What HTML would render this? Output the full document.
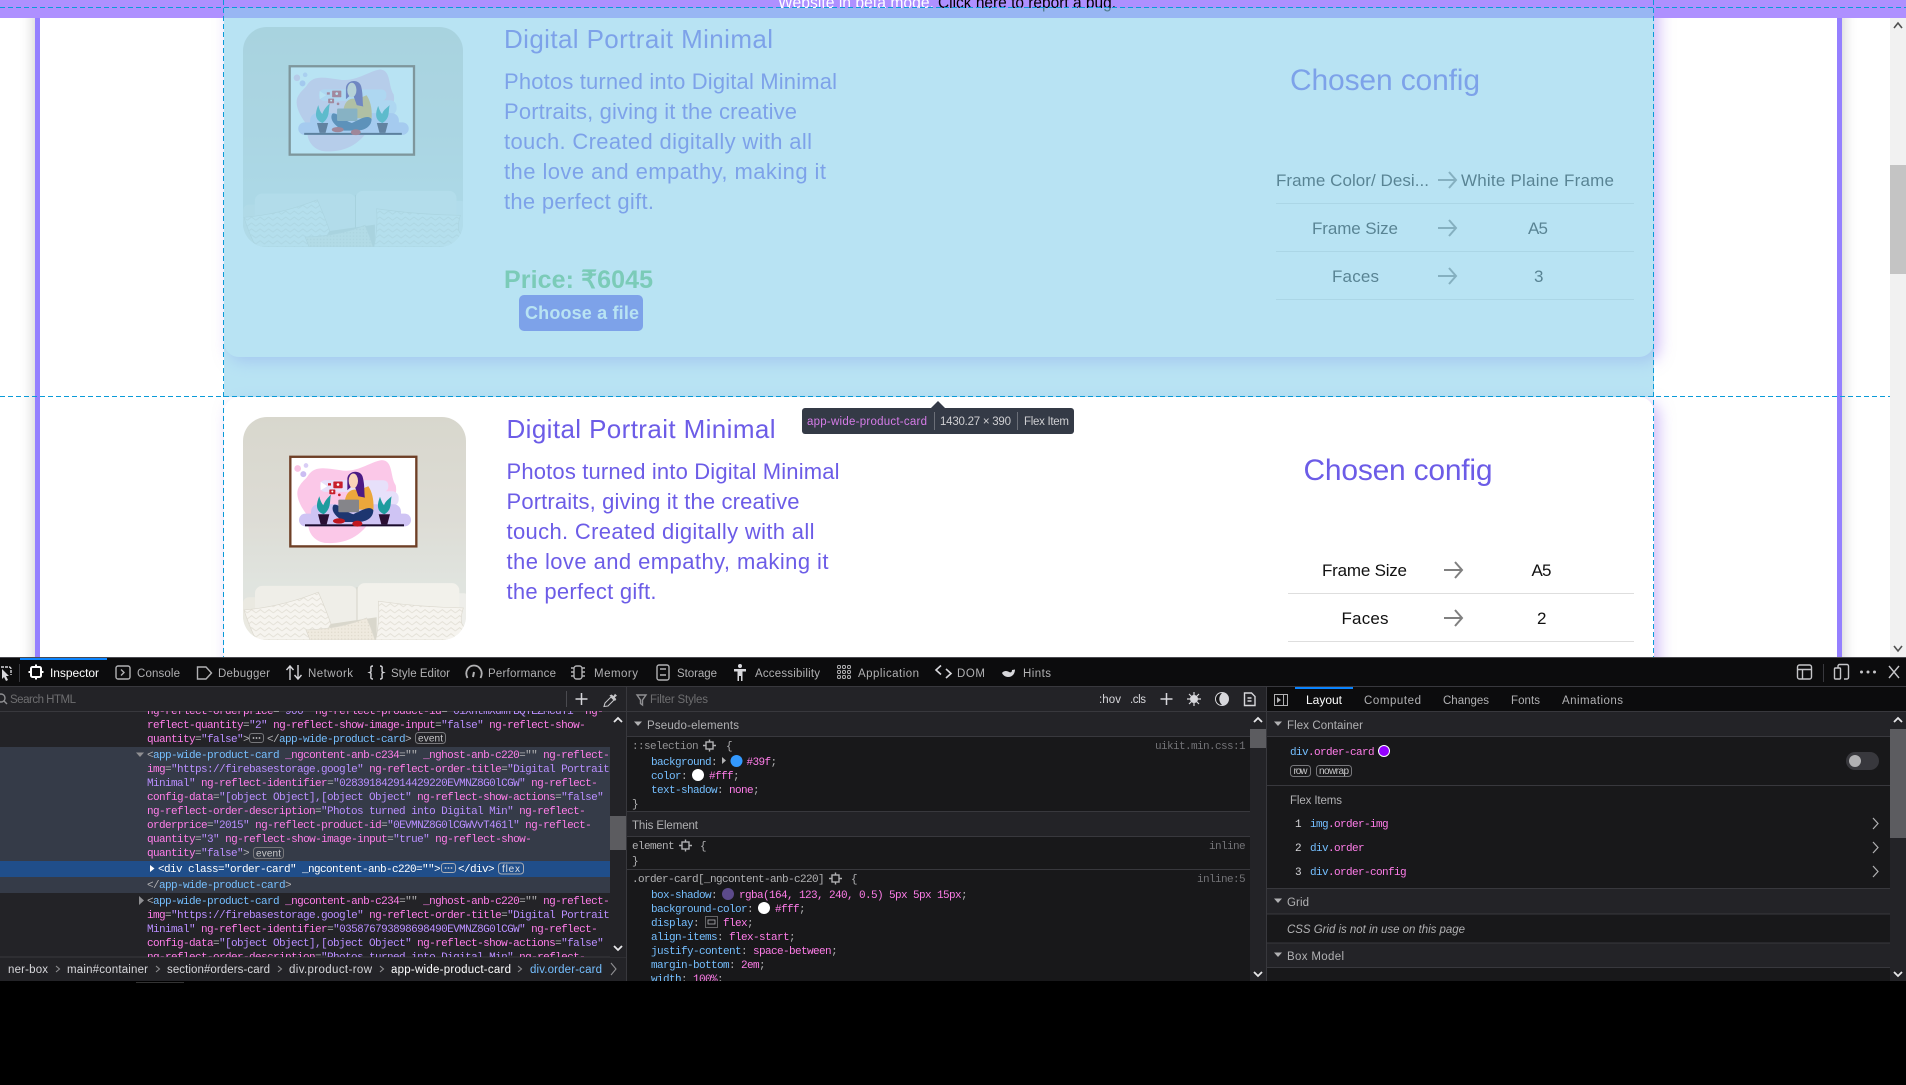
<!DOCTYPE html>
<html lang="en">
<head>
<meta charset="utf-8">
<title>Orders</title>
<style>
html,body{margin:0;padding:0;width:1906px;height:1085px;overflow:hidden;background:#000}
.abs{position:absolute}
#page{position:absolute;left:0;top:0;width:1906px;height:657px;background:#fff;overflow:hidden}
#box{position:absolute;left:35px;top:0;width:1797px;height:800px;border-left:5px solid #9580ff;border-right:5px solid #9580ff;background:#fff;box-shadow:0 0 14px rgba(0,0,0,.22)}
.card{position:absolute;left:224px;width:1430px;background:#fff;border-radius:15px;box-shadow:5px 5px 15px rgba(164,123,240,.5)}
#bar{position:absolute;left:0;top:0;width:1906px;height:18px;background:#ae90ff}
#sb{position:absolute;left:1890px;top:18px;width:16px;height:639px;background:#f1f1f1}
#th{position:absolute;left:0;top:147px;width:16px;height:109px;background:#c4c4c4}
#hl{position:absolute;left:224px;top:7.5px;width:1430px;height:389px;background:rgba(137,208,235,.6)}
svg{position:absolute;left:0;top:0;display:block}
text{font-family:"Liberation Sans",sans-serif;white-space:pre}
.m{font-family:"Liberation Mono","DejaVu Sans Mono",monospace;font-size:11px;letter-spacing:-.6px;fill:#b1b1b3}
.a{fill:#ff7de9}.b{fill:#75bfff}.v{fill:#b98eff}.p{fill:#b1b1b3}.w{fill:#fff}.g{fill:#8a8a8e}
.u{font-size:11.5px;fill:#b1b1b3}
.pt{fill:#6c5ce7}
.rw{font-size:17px;fill:#111}
.ic{fill:none;stroke:#b1b1b3;stroke-width:1.4}
.hd{font-size:11.5px;fill:#b1b1b3}
.ln{fill:#38383d}
.bd{fill:none;stroke:#77777b;stroke-width:1}
.bt{font-size:10px;fill:#c8c8ca}
</style>
</head>
<body>
<div id="page">
  <div id="box"></div>
  <div class="card" style="top:-33px;height:390px"></div>
  <div class="card" style="top:397px;height:390px"></div>
  <div id="bar"></div>
  <div id="sb"><div id="th"></div></div>
  <svg width="1906" height="657" viewBox="0 0 1906 657">
    <defs>
      <linearGradient id="wall" x1="0" y1="0" x2="0" y2="1">
        <stop offset="0" stop-color="#d8d7cd"/><stop offset=".45" stop-color="#dddcd5"/><stop offset=".75" stop-color="#e0e4df"/><stop offset="1" stop-color="#e4e6e0"/>
      </linearGradient>
      <pattern id="kn" width="26" height="18" patternUnits="userSpaceOnUse">
        <rect width="26" height="18" fill="#f6f4ef"/>
        <path d="M0 13L13 3L26 13" fill="none" stroke="#e2dfd5" stroke-width="2.500"/>
      </pattern>
      <pattern id="kd" width="10" height="10" patternUnits="userSpaceOnUse">
        <rect width="10" height="10" fill="#efeadf"/>
        <circle cx="5" cy="5" r="2" fill="#dfd9cb"/>
      </pattern>
      <clipPath id="rc"><rect x="39" y="21" width="669" height="667" rx="72"/></clipPath>
      <symbol id="art" viewBox="39 21 669 667" preserveAspectRatio="none">
        <g clip-path="url(#rc)">
          <rect x="39" y="21" width="669" height="667" fill="url(#wall)"/>
          <rect x="181" y="140" width="378" height="268" fill="#fff" stroke="#6e3f26" stroke-width="7"/>
          <path d="M235 195C255 165 290 175 330 180C380 190 420 155 455 150C490 150 480 200 497 225C505 260 480 290 440 300C400 380 350 400 290 398C245 395 225 350 240 325C210 290 190 250 210 225C220 210 230 205 235 195Z" fill="#fbc8e8"/>
          <rect x="270" y="210" width="205" height="35" rx="15" fill="#e7e0fa"/>
          <rect x="400" y="243" width="106" height="45" rx="20" fill="#e7e0fa"/>
          <rect x="243" y="282" width="270" height="50" rx="22" fill="#cfc4f4"/>
          <rect x="207" y="310" width="336" height="38" rx="19" fill="#cfc4f4"/>
          <circle cx="203" cy="175" r="10" fill="#f9c3e4"/><circle cx="228" cy="166" r="7" fill="#d9cdf5"/><circle cx="220" cy="192" r="9" fill="#cbbdf2"/>
          <path d="M272 215L292 228L272 240Z" fill="#fff"/>
          <path d="M281 312C262 305 254 290 268 258C272 275 276 280 280 285C285 270 295 260 303 253C298 272 305 295 281 312Z" fill="#1e9c9e"/>
          <path d="M264 312H298L290 342H272Z" fill="#2a0f33"/>
          <path d="M463 312C444 305 438 290 450 260C455 275 458 280 462 285C466 272 478 265 485 258C480 275 488 298 463 312Z" fill="#1e9c9e"/>
          <path d="M446 312H480L472 342H454Z" fill="#2a0f33"/>
          <rect x="225" y="342" width="297" height="6" fill="#1a0c2c"/>
          <path d="M345 270C350 240 370 235 385 240L415 228C430 250 432 280 430 300L345 295Z" fill="#eba73b"/>
          <path d="M352 205C355 180 392 178 398 200C405 225 402 255 405 262L385 258L372 222L352 240Z" fill="#4b1a85"/>
          <ellipse cx="370" cy="212" rx="14" ry="22" fill="#f9d3b8"/>
          <path d="M310 285C320 275 345 305 370 312C395 300 420 285 430 300C430 325 405 335 385 335L345 335C325 325 300 305 310 285Z" fill="#1d3670"/>
          <rect x="325" y="268" width="62" height="38" rx="3" fill="#85858a"/>
          <ellipse cx="327" cy="332" rx="18" ry="8" fill="#c0181f"/><ellipse cx="382" cy="340" rx="15" ry="9" fill="#c0181f"/>
          <rect x="310" y="214" width="28" height="20" rx="2" fill="#c8202c"/><rect x="298" y="238" width="18" height="14" rx="2" fill="#c8202c"/><rect x="294" y="219" width="9" height="7" fill="#c8202c"/><circle cx="328" cy="254" r="4" fill="#c8202c"/>
          <circle cx="324" cy="223" r="4" fill="#fff"/><circle cx="307" cy="244" r="3" fill="#fff"/>
          <rect x="39" y="560" width="55" height="135" rx="18" fill="#eae9e1"/><rect x="665" y="548" width="50" height="145" rx="14" fill="#eeeeea"/>
          <rect x="75" y="526" width="307" height="170" rx="22" fill="#efeee8"/>
          <rect x="382" y="518" width="306" height="176" rx="22" fill="#f2f1eb"/>
          <path d="M381 530V690" stroke="#cfcec4" stroke-width="2.500"/>
          <path d="M300 640L440 620L440 690H290Z" fill="#d9d7cc"/>
          <path d="M42 598Q150 590 265 545Q285 590 303 640Q285 660 300 688L78 688Q55 640 42 598Z" fill="url(#kn)" stroke="#dcd9cf" stroke-width="2"/>
          <path d="M228 658Q330 655 410 622Q425 655 435 688L240 688Q235 675 228 658Z" fill="url(#kd)" stroke="#dcd9cf" stroke-width="2"/>
          <path d="M445 572Q570 590 700 592Q685 640 705 650Q695 670 680 688L437 688Q450 630 445 572Z" fill="url(#kn)" stroke="#dcd9cf" stroke-width="2"/>
        </g>
      </symbol>
    </defs>

    <text x="778" y="8" font-size="17" fill="#fff" textLength="156" lengthAdjust="spacingAndGlyphs">Website in beta mode.</text>
    <text x="938" y="8" font-size="17" fill="#000" textLength="178" lengthAdjust="spacingAndGlyphs">Click here to report a bug.</text>

    <!-- Card 1 -->
    <use href="#art" x="243" y="27" width="220" height="220"/>
    <text class="pt" x="504" y="48" font-size="26" textLength="269">Digital Portrait Minimal</text>
    <text class="pt" x="504" y="89" font-size="22" textLength="333">Photos turned into Digital Minimal</text>
    <text class="pt" x="504" y="119" font-size="22" textLength="293">Portraits, giving it the creative</text>
    <text class="pt" x="504" y="149" font-size="22" textLength="308">touch. Created digitally with all</text>
    <text class="pt" x="504" y="179" font-size="22" textLength="322">the love and empathy, making it</text>
    <text class="pt" x="504" y="209" font-size="22" textLength="150">the perfect gift.</text>
    <text x="504" y="288" font-size="25" font-weight="700" fill="#66c36b" textLength="149">Price: ₹6045</text>
    <rect x="519" y="295" width="124" height="36" rx="5" fill="#6c5ce7"/>
    <text x="525" y="319" font-size="18" font-weight="700" fill="#fff" textLength="114">Choose a file</text>
    <text class="pt" x="1290" y="90" font-size="30" textLength="190">Chosen config</text>
    <text class="rw" x="1276" y="186" textLength="153">Frame Color/ Desi...</text>
    <text class="rw" x="1461" y="186" textLength="153">White Plaine Frame</text>
    <text class="rw" x="1312" y="234" textLength="86">Frame Size</text>
    <text class="rw" x="1528" y="234" textLength="20">A5</text>
    <text class="rw" x="1332" y="282" textLength="47">Faces</text>
    <text class="rw" x="1534" y="282" textLength="9">3</text>
    <g fill="none" stroke="#808080" stroke-width="2">
      <path d="M1438 180H1456M1449 172L1456 180L1449 188"/>
      <path d="M1438 228H1456M1449 220L1456 228L1449 236"/>
      <path d="M1438 276H1456M1449 268L1456 276L1449 284"/>
      <path d="M1444 570H1462M1455 562L1462 570L1455 578"/>
      <path d="M1444 618H1462M1455 610L1462 618L1455 626"/>
    </g>
    <g fill="#dedede">
      <rect x="1276" y="203" width="358" height="1"/><rect x="1276" y="251" width="358" height="1"/><rect x="1276" y="299" width="358" height="1"/>
      <rect x="1288" y="593" width="346" height="1"/><rect x="1288" y="641" width="346" height="1"/>
    </g>

    <!-- Card 2 -->
    <use href="#art" x="243" y="417" width="223" height="223"/>
    <text class="pt" x="506.5" y="438" font-size="26" textLength="269">Digital Portrait Minimal</text>
    <text class="pt" x="506.5" y="479" font-size="22" textLength="333">Photos turned into Digital Minimal</text>
    <text class="pt" x="506.5" y="509" font-size="22" textLength="293">Portraits, giving it the creative</text>
    <text class="pt" x="506.5" y="539" font-size="22" textLength="308">touch. Created digitally with all</text>
    <text class="pt" x="506.5" y="569" font-size="22" textLength="322">the love and empathy, making it</text>
    <text class="pt" x="506.5" y="599" font-size="22" textLength="150">the perfect gift.</text>
    <text class="pt" x="1303.5" y="480" font-size="30" textLength="189">Chosen config</text>
    <text class="rw" x="1322" y="576" textLength="85">Frame Size</text>
    <text class="rw" x="1531.5" y="576" textLength="20">A5</text>
    <text class="rw" x="1341.5" y="624" textLength="47">Faces</text>
    <text class="rw" x="1537" y="624" textLength="9">2</text>

    <!-- scrollbar arrows -->
    <path d="M1894 28L1898 23L1902 28" fill="none" stroke="#505050" stroke-width="1.6"/>
    <path d="M1894 646L1898 651L1902 646" fill="none" stroke="#505050" stroke-width="1.6"/>
  </svg>
  <div id="hl"></div>
  <svg width="1906" height="657" viewBox="0 0 1906 657">
    <g stroke="#0a9bd8" stroke-width="1" stroke-dasharray="5 3" fill="none">
      <path d="M0 7.5H1906"/>
      <path d="M0 396.5H1890"/>
      <path d="M223.5 0V657"/>
      <path d="M1653.5 0V657"/>
    </g>
    <path d="M938 401L931 408H945Z" fill="#343a46"/>
    <rect x="802" y="408" width="272" height="26" rx="3" fill="#343a46"/>
    <text x="807" y="425" font-size="11.5" fill="#d67ce8" textLength="120">app-wide-product-card</text>
    <rect x="934" y="412" width="1" height="18" fill="#6b6f78"/>
    <text x="940" y="425" font-size="11.5" fill="#cfcfd2" textLength="71">1430.27 × 390</text>
    <rect x="1017" y="412" width="1" height="18" fill="#6b6f78"/>
    <text x="1024" y="425" font-size="11.5" fill="#cfcfd2" textLength="45">Flex Item</text>
  </svg>
</div>

<svg width="1906" height="1085" viewBox="0 0 1906 1085" style="top:0;left:0">
  <defs>
    <clipPath id="ch"><rect x="0" y="711" width="610" height="246"/></clipPath>
    <clipPath id="cs"><rect x="627" y="711" width="623" height="270"/></clipPath>
  </defs>
  <!-- base panels -->
  <rect x="0" y="657" width="1906" height="428" fill="#000"/>
  <rect x="0" y="657" width="1906" height="1" fill="#4a4a4f"/>
  <rect x="0" y="658" width="1906" height="28" fill="#0c0c0d"/>
  <rect x="0" y="686" width="1906" height="1" fill="#38383d"/>
  <rect x="0" y="687" width="1267" height="24" fill="#232327"/>
  <rect x="1267" y="687" width="639" height="24" fill="#0c0c0d"/>
  <rect x="0" y="711" width="1906" height="1" fill="#38383d"/>
  <rect x="0" y="712" width="610" height="245" fill="#232327"/>
  <rect x="0" y="747" width="610" height="146" fill="#353b48"/>
  <rect x="0" y="861" width="610" height="16" fill="#204e8a"/>
  <rect x="0" y="957" width="627" height="24" fill="#232327"/>
  <rect x="0" y="956.5" width="627" height="1" fill="#38383d"/>
  <rect x="610" y="712" width="16" height="245" fill="#232327"/>
  <rect x="610" y="816" width="16" height="34" fill="#5c5c60"/>
  <rect x="626" y="687" width="1" height="294" fill="#38383d"/>
  <rect x="627" y="712" width="623" height="269" fill="#18181a"/>
  <rect x="1250" y="712" width="16" height="269" fill="#232327"/>
  <rect x="1250" y="729" width="16" height="19" fill="#5c5c60"/>
  <rect x="1266" y="687" width="1" height="294" fill="#38383d"/>
  <rect x="1267" y="712" width="623" height="269" fill="#18181a"/>
  <rect x="1890" y="712" width="16" height="269" fill="#232327"/>
  <rect x="1890" y="729" width="16" height="109" fill="#5c5c60"/>
  <rect x="136" y="982" width="48" height="1" fill="#333"/>

  <!-- scroll arrows -->
  <g fill="none" stroke="#e8e8ea" stroke-width="1.8">
    <path d="M614 722L618 718L622 722"/><path d="M614 946L618 950L622 946"/>
    <path d="M1254 722L1258 718L1262 722"/><path d="M1254 972L1258 976L1262 972"/>
    <path d="M1894 722L1898 718L1902 722"/><path d="M1894 972L1898 976L1902 972"/>
  </g>

  <!-- main tabs -->
  <rect x="20" y="658" width="87" height="2" fill="#0a84ff"/>
  <rect x="19" y="664" width="1" height="18" fill="#38383d"/>
  <g fill="none" stroke="#d7d7db" stroke-width="1.4">
    <path d="M1 667H9a2 2 0 0 1 2 2V675" stroke-dasharray="3 1"/>
    <path d="M2 669L9 676L6 676L8 680L6 681L4 677L2 679Z" fill="#d7d7db" stroke="none"/>
  </g>
  <g fill="none" stroke="#fff" stroke-width="2">
    <rect x="31" y="667" width="10" height="10" rx="1.5"/>
    <path d="M36 664.500V667M36 677V679.500M28.500 672H31M41 672H43.500"/>
  </g>
  <text class="w" x="50" y="677" font-size="12" textLength="49">Inspector</text>

  <g class="ic">
    <rect x="116" y="666" width="14" height="13" rx="2"/>
    <path d="M121 669.500L124 672.500L121 675.500"/>
    <path d="M197.500 667H206L211.500 673L206 679H197.500Z"/>
    <path d="M290 680V666M286.500 670L290 666L293.500 670M298 665V679M294.500 675L298 679L301.500 675" stroke="#d7d7db"/>
    <path d="M467.500 678C464 671 469 665.500 474 665.500C479 665.500 484 671 480.500 678" stroke-width="1.8"/>
    <path d="M474 672L473 677" stroke-width="2"/>
    <rect x="574" y="666" width="8" height="13" rx="2.500"/>
    <path d="M571 668H574M571 672H574M571 676H574M582 668H585M582 672H585M582 676H585"/>
    <rect x="657" y="665" width="12" height="15" rx="2"/>
    <path d="M660 669H666M660 675H666"/>
    <rect x="837.500" y="665.500" width="3" height="3" rx="1.200" stroke-width="1"/><rect x="842.500" y="665.500" width="3" height="3" rx="1.200" stroke-width="1"/><rect x="847.500" y="665.500" width="3" height="3" rx="1.200" stroke-width="1"/>
    <rect x="837.500" y="670.500" width="3" height="3" rx="1.200" stroke-width="1"/><rect x="842.500" y="670.500" width="3" height="3" rx="1.200" stroke-width="1"/><rect x="847.500" y="670.500" width="3" height="3" rx="1.200" stroke-width="1"/>
    <rect x="837.500" y="675.500" width="3" height="3" rx="1.200" stroke-width="1"/><rect x="842.500" y="675.500" width="3" height="3" rx="1.200" stroke-width="1"/><rect x="847.500" y="675.500" width="3" height="3" rx="1.200" stroke-width="1"/>
    <path d="M941 665.500L936 670L941 674.500M946 669L951 673.500L946 678" stroke="#d7d7db" stroke-width="1.600"/>
    <path d="M373 666C370 666 371 668 371 670C371 672 371 672 369.500 672.500C371 673 371 673 371 675C371 677 370 679 373 679M380 666C383 666 382 668 382 670C382 672 382 672 383.500 672.500C382 673 382 673 382 675C382 677 383 679 380 679" stroke="#d7d7db" stroke-width="1.400"/>
  </g>
  <g fill="#d7d7db">
    <circle cx="740" cy="666" r="2"/>
    <path d="M734 669H746V671.500H742.500V681H741V676H739V681H737.500V671.500H734Z"/>
    <path d="M1002 673C1004 670 1008 671 1009 672C1011 673 1012 672 1012 670L1015 669.500C1015 673 1013 677 1008 677C1005 677 1003 675 1002 673Z"/>
  </g>

  <text class="u" x="137" y="677" font-size="12" textLength="43">Console</text>
  <text class="u" x="218" y="677" textLength="52">Debugger</text>
  <text class="u" x="308" y="677" textLength="45">Network</text>
  <text class="u" x="391" y="677" textLength="59">Style Editor</text>
  <text class="u" x="488" y="677" textLength="68">Performance</text>
  <text class="u" x="594" y="677" textLength="44">Memory</text>
  <text class="u" x="677" y="677" textLength="40">Storage</text>
  <text class="u" x="755" y="677" textLength="65">Accessibility</text>
  <text class="u" x="858" y="677" textLength="61">Application</text>
  <text class="u" x="957" y="677" textLength="28">DOM</text>
  <text class="u" x="1023" y="677" textLength="28">Hints</text>

  <!-- right toolbar icons -->
  <g fill="none" stroke="#c5c5c8" stroke-width="1.400">
    <rect x="1797.500" y="665" width="14" height="14" rx="2"/>
    <path d="M1798 669.500H1811M1802.500 669.500V679"/>
    <rect x="1834.500" y="668" width="6" height="11" rx="1"/>
    <path d="M1838 668V666a1.500 1.500 0 0 1 1.500 -1.500H1847a1.500 1.500 0 0 1 1.500 1.500V677.500a1.500 1.500 0 0 1 -1.500 1.500H1844"/>
    <path d="M1889 666L1899 678M1899 666L1889 678"/>
  </g>
  <rect x="1823" y="664" width="1" height="18" fill="#38383d"/>
  <g fill="#c5c5c8"><circle cx="1861.500" cy="672" r="1.500"/><circle cx="1868" cy="672" r="1.500"/><circle cx="1874.500" cy="672" r="1.500"/></g>

  <!-- search row -->
  <g fill="none" stroke="#8f8f92" stroke-width="1.400">
    <circle cx="1" cy="698" r="4"/><path d="M4 701L7 704"/>
    <path d="M637 695H646L642.500 700V705L640.500 703.500V700Z"/>
  </g>
  <text x="10" y="703" font-size="11.500" fill="#6e6e70" textLength="66">Search HTML</text>
  <rect x="566" y="691" width="1" height="16" fill="#4a4a4f"/>
  <path d="M581.500 693V705M575.500 699H587.500" stroke="#d7d7db" stroke-width="1.500" fill="none"/>
  <path d="M604 706.500L605 703L611 697L614 700L608 706Z" fill="none" stroke="#c5c5c8" stroke-width="1.100"/>
  <path d="M609.500 695.500L611.500 694.500L613.500 696L615 693.800L617 695.800L614.800 697.300L616.300 699.300L615 701Z" fill="#c5c5c8"/>
  <text x="650" y="703" font-size="11.500" fill="#6e6e70" textLength="58">Filter Styles</text>
  <text x="1099" y="703" font-size="11.500" fill="#d7d7db" textLength="22">:hov</text>
  <text x="1130" y="703" font-size="11.500" fill="#d7d7db" textLength="16">.cls</text>
  <path d="M1166.500 693V705M1160.500 699H1172.500" stroke="#d7d7db" stroke-width="1.500" fill="none"/>
  <circle cx="1194" cy="699" r="4" fill="#d7d7db"/>
  <path d="M1194 692V706M1187 699H1201M1189 694L1199 704M1199 694L1189 704" stroke="#d7d7db" stroke-width="1.200"/>
  <circle cx="1222" cy="699" r="7" fill="#d7d7db"/>
  <path d="M1222 693A6 6 0 0 0 1222 705A8 8 0 0 1 1222 693Z" fill="#18181a"/>
  <path d="M1245 693H1252L1255.500 696.500V705.500H1245ZM1248 698H1252M1248 701H1252" transform="translate(-.5 0)" fill="none" stroke="#d7d7db" stroke-width="1.400"/>

  <!-- right tabs -->
  <rect x="1274.500" y="694.500" width="13" height="11" fill="none" stroke="#b1b1b3"/>
  <rect x="1283" y="695" width="1" height="10" fill="#b1b1b3"/>
  <path d="M1277 697L1281 700L1277 703Z" fill="#b1b1b3"/>
  <rect x="1295" y="687" width="58" height="2" fill="#0a84ff"/>
  <text class="w" x="1306" y="704" font-size="12" textLength="36">Layout</text>
  <text class="u" x="1364" y="704" textLength="57">Computed</text>
  <text class="u" x="1443" y="704" textLength="46">Changes</text>
  <text class="u" x="1511" y="704" textLength="29">Fonts</text>
  <text class="u" x="1562" y="704" textLength="61">Animations</text>

  <!-- HTML panel -->
  <g clip-path="url(#ch)">
    <text class="m" x="147" y="714"><tspan class="a">ng-reflect-orderprice</tspan>=<tspan class="v">"906"</tspan> <tspan class="a">ng-reflect-product-id</tspan>=<tspan class="v">"01XhtmXdmfBQYEZMcdTi"</tspan> <tspan class="a">ng-</tspan></text>
    <text class="m" x="147" y="728"><tspan class="a">reflect-quantity</tspan>=<tspan class="v">"2"</tspan> <tspan class="a">ng-reflect-show-image-input</tspan>=<tspan class="v">"false"</tspan> <tspan class="a">ng-reflect-show-</tspan></text>
    <text class="m" x="147" y="742"><tspan class="a">quantity</tspan>=<tspan class="v">"false"</tspan>&gt;</text>
    <text class="m" x="267" y="742">&lt;/<tspan class="b">app-wide-product-card</tspan>&gt;</text>

    <text class="m" x="147" y="758">&lt;<tspan class="b">app-wide-product-card</tspan> <tspan class="a">_ngcontent-anb-c234</tspan>="" <tspan class="a">_nghost-anb-c220</tspan>="" <tspan class="a">ng-reflect-</tspan></text>
    <text class="m" x="147" y="772"><tspan class="a">img</tspan>=<tspan class="v">"https://firebasestorage.google"</tspan> <tspan class="a">ng-reflect-order-title</tspan>=<tspan class="v">"Digital Portrait</tspan></text>
    <text class="m" x="147" y="786"><tspan class="v">Minimal"</tspan> <tspan class="a">ng-reflect-identifier</tspan>=<tspan class="v">"028391842914429220EVMNZ8G0lCGW"</tspan> <tspan class="a">ng-reflect-</tspan></text>
    <text class="m" x="147" y="800"><tspan class="a">config-data</tspan>=<tspan class="v">"[object Object],[object Object"</tspan> <tspan class="a">ng-reflect-show-actions</tspan>=<tspan class="v">"false"</tspan></text>
    <text class="m" x="147" y="814"><tspan class="a">ng-reflect-order-description</tspan>=<tspan class="v">"Photos turned into Digital Min"</tspan> <tspan class="a">ng-reflect-</tspan></text>
    <text class="m" x="147" y="828"><tspan class="a">orderprice</tspan>=<tspan class="v">"2015"</tspan> <tspan class="a">ng-reflect-product-id</tspan>=<tspan class="v">"0EVMNZ8G0lCGWVvT461l"</tspan> <tspan class="a">ng-reflect-</tspan></text>
    <text class="m" x="147" y="842"><tspan class="a">quantity</tspan>=<tspan class="v">"3"</tspan> <tspan class="a">ng-reflect-show-image-input</tspan>=<tspan class="v">"true"</tspan> <tspan class="a">ng-reflect-show-</tspan></text>
    <text class="m" x="147" y="856"><tspan class="a">quantity</tspan>=<tspan class="v">"false"</tspan>&gt;</text>
    <text class="m" x="158" y="872" style="fill:#fff">&lt;div class="order-card" _ngcontent-anb-c220=""&gt;</text>
    <text class="m" x="458" y="872" style="fill:#fff">&lt;/div&gt;</text>
    <text class="m" x="147" y="888">&lt;/<tspan class="b">app-wide-product-card</tspan>&gt;</text>

    <text class="m" x="147" y="904">&lt;<tspan class="b">app-wide-product-card</tspan> <tspan class="a">_ngcontent-anb-c234</tspan>="" <tspan class="a">_nghost-anb-c220</tspan>="" <tspan class="a">ng-reflect-</tspan></text>
    <text class="m" x="147" y="918"><tspan class="a">img</tspan>=<tspan class="v">"https://firebasestorage.google"</tspan> <tspan class="a">ng-reflect-order-title</tspan>=<tspan class="v">"Digital Portrait</tspan></text>
    <text class="m" x="147" y="932"><tspan class="v">Minimal"</tspan> <tspan class="a">ng-reflect-identifier</tspan>=<tspan class="v">"035876793898698490EVMNZ8G0lCGW"</tspan> <tspan class="a">ng-reflect-</tspan></text>
    <text class="m" x="147" y="946"><tspan class="a">config-data</tspan>=<tspan class="v">"[object Object],[object Object"</tspan> <tspan class="a">ng-reflect-show-actions</tspan>=<tspan class="v">"false"</tspan></text>
    <text class="m" x="147" y="960"><tspan class="a">ng-reflect-order-description</tspan>=<tspan class="v">"Photos turned into Digital Min"</tspan> <tspan class="a">ng-reflect-</tspan></text>
  </g>
  <!-- tree arrows + badges -->
  <path d="M136 752.500H144L140 757Z" fill="#8f8f92"/>
  <path d="M150 865V872L154.500 868.500Z" fill="#fff"/>
  <path d="M139 896V905L144 900.500Z" fill="#8f8f92"/>
  <g class="bd">
    <rect x="249.500" y="733.500" width="14" height="9" rx="2.500"/>
    <rect x="415.500" y="732.500" width="30" height="11" rx="3"/>
    <rect x="253.500" y="847.500" width="30" height="11" rx="3"/>
    <rect x="441.500" y="863.500" width="14" height="9" rx="2.500" stroke="#a8acb4"/>
    <rect x="498.500" y="863" width="25" height="11" rx="3" stroke="#a8acb4"/>
  </g>
  <g fill="#c8c8ca"><circle cx="253.500" cy="738" r=".9"/><circle cx="256.500" cy="738" r=".9"/><circle cx="259.500" cy="738" r=".9"/><circle cx="445.500" cy="868" r=".9"/><circle cx="448.500" cy="868" r=".9"/><circle cx="451.500" cy="868" r=".9"/></g>
  <text class="bt" x="418" y="741.500" textLength="25">event</text>
  <text class="bt" x="256" y="856.500" textLength="25">event</text>
  <text class="bt" x="502" y="872" textLength="18" style="fill:#e0e0e2">flex</text>

  <!-- breadcrumb -->
  <g font-size="11.500" fill="#d7d7db">
    <text x="8" y="973" textLength="40" fill="#d7d7db">ner-box</text>
    <text x="67" y="973" textLength="81" fill="#d7d7db">main#container</text>
    <text x="167" y="973" textLength="103" fill="#d7d7db">section#orders-card</text>
    <text x="289" y="973" textLength="83" fill="#d7d7db">div.product-row</text>
    <text x="391" y="973" textLength="120" fill="#fff">app-wide-product-card</text>
    <text x="530" y="973" textLength="72" fill="#75bfff">div.order-card</text>
  </g>
  <g fill="none" stroke="#8f8f92" stroke-width="1.100">
    <path d="M56 966L59.500 969L56 972M156 966L159.500 969L156 972M278 966L281.500 969L278 972M380 966L383.500 969L380 972M518 966L521.500 969L518 972"/>
    <path d="M611 963L616 969L611 975"/>
  </g>

  <!-- Styles panel -->
  <g clip-path="url(#cs)">
    <rect x="627" y="712" width="623" height="24" fill="#232327"/>
    <rect x="627" y="736" width="623" height="1" class="ln"/>
    <path d="M634 721.500H642L638 726Z" fill="#b1b1b3"/>
    <text class="hd" x="647" y="729" textLength="92">Pseudo-elements</text>
    <text class="m" x="632" y="749" style="fill:#939395">::selection</text>
    <text class="m" x="726" y="749">{</text>
    <text class="m" x="1245" y="749" text-anchor="end" style="fill:#737377">uikit.min.css:1</text>
    <text class="m" x="651" y="765"><tspan class="b">background</tspan>: </text>
    <path d="M722 757V764L726 760.500Z" fill="#b1b1b3"/>
    <circle cx="736.500" cy="761" r="6" fill="#3399ff"/>
    <text class="m" x="746.500" y="765"><tspan class="a">#39f</tspan>;</text>
    <text class="m" x="651" y="779"><tspan class="b">color</tspan>: </text>
    <circle cx="698" cy="775" r="6" fill="#fff"/>
    <text class="m" x="709" y="779"><tspan class="a">#fff</tspan>;</text>
    <text class="m" x="651" y="793"><tspan class="b">text-shadow</tspan>: <tspan class="a">none</tspan>;</text>
    <text class="m" x="632" y="807">}</text>
    <rect x="627" y="811" width="623" height="25" fill="#232327"/>
    <rect x="627" y="811" width="623" height="1" class="ln"/>
    <rect x="627" y="836" width="623" height="1" class="ln"/>
    <text class="hd" x="632" y="829" textLength="66">This Element</text>
    <text class="m" x="632" y="849">element</text>
    <text class="m" x="700" y="849">{</text>
    <text class="m" x="1245" y="849" text-anchor="end" style="fill:#737377">inline</text>
    <text class="m" x="632" y="864">}</text>
    <rect x="627" y="869" width="623" height="1" class="ln"/>
    <text class="m" x="632" y="882">.order-card[_ngcontent-anb-c220]</text>
    <text class="m" x="851" y="882">{</text>
    <text class="m" x="1245" y="882" text-anchor="end" style="fill:#737377">inline:5</text>
    <text class="m" x="651" y="898"><tspan class="b">box-shadow</tspan>: </text>
    <circle cx="728" cy="894" r="6" fill="#5c4a8a"/>
    <text class="m" x="739" y="898"><tspan class="a">rgba(164, 123, 240, 0.5) 5px 5px 15px</tspan>;</text>
    <text class="m" x="651" y="912"><tspan class="b">background-color</tspan>: </text>
    <circle cx="764" cy="908" r="6" fill="#fff"/>
    <text class="m" x="775" y="912"><tspan class="a">#fff</tspan>;</text>
    <text class="m" x="651" y="926"><tspan class="b">display</tspan>: </text>
    <rect x="705.500" y="916.500" width="12" height="11" fill="none" stroke="#b1b1b3" stroke-dasharray="1 1"/>
    <rect x="708" y="920" width="7" height="4" fill="none" stroke="#b1b1b3" stroke-width=".8"/>
    <text class="m" x="723" y="926"><tspan class="a">flex</tspan>;</text>
    <text class="m" x="651" y="940"><tspan class="b">align-items</tspan>: <tspan class="a">flex-start</tspan>;</text>
    <text class="m" x="651" y="954"><tspan class="b">justify-content</tspan>: <tspan class="a">space-between</tspan>;</text>
    <text class="m" x="651" y="968"><tspan class="b">margin-bottom</tspan>: <tspan class="a">2em</tspan>;</text>
    <text class="m" x="651" y="982"><tspan class="b">width</tspan>: <tspan class="a">100%</tspan>;</text>
  </g>
  <!-- gear icons -->
  <g fill="none" stroke="#b1b1b3" stroke-width="1.400">
    <rect x="706" y="742" width="7" height="7"/><path d="M709.500 739.500V742M709.500 749V751.500M703 745.500H706M713 745.500H716"/>
    <rect x="682" y="842" width="7" height="7"/><path d="M685.500 839.500V842M685.500 849V851.500M679 845.500H682M689 845.500H692"/>
    <rect x="832" y="875" width="7" height="7"/><path d="M835.500 872.500V875M835.500 882V884.500M829 878.500H832M839 878.500H842"/>
  </g>

  <!-- Layout panel -->
  <rect x="1267" y="712" width="623" height="24" fill="#232327"/>
  <rect x="1267" y="736" width="623" height="1" class="ln"/>
  <path d="M1274 721.500H1282L1278 726Z" fill="#b1b1b3"/>
  <text class="hd" x="1287" y="729" textLength="76">Flex Container</text>
  <text class="m" x="1290" y="755"><tspan class="b">div</tspan><tspan class="a">.order-card</tspan></text>
  <circle cx="1384" cy="751" r="5.500" fill="#9400ff" stroke="#fff" stroke-width="1"/>
  <rect x="1290.500" y="765.500" width="20" height="11" rx="3" class="bd"/>
  <rect x="1316.500" y="765.500" width="35" height="11" rx="3" class="bd"/>
  <text class="bt" x="1293.500" y="774" textLength="14">row</text>
  <text class="bt" x="1319" y="774" textLength="30">nowrap</text>
  <rect x="1846" y="752" width="33" height="18" rx="9" fill="#38383d"/>
  <circle cx="1855" cy="761" r="6" fill="#b1b1b3"/>
  <rect x="1267" y="785" width="623" height="1" class="ln"/>
  <text class="hd" x="1290" y="804" textLength="52">Flex Items</text>
  <text class="m" x="1295" y="827" style="fill:#d7d7db">1</text>
  <text class="m" x="1310" y="827"><tspan class="b">img</tspan><tspan class="a">.order-img</tspan></text>
  <text class="m" x="1295" y="851" style="fill:#d7d7db">2</text>
  <text class="m" x="1310" y="851"><tspan class="b">div</tspan><tspan class="a">.order</tspan></text>
  <text class="m" x="1295" y="875" style="fill:#d7d7db">3</text>
  <text class="m" x="1310" y="875"><tspan class="b">div</tspan><tspan class="a">.order-config</tspan></text>
  <path d="M1873 818L1878 823.500L1873 829M1873 842L1878 847.500L1873 853M1873 866L1878 871.500L1873 877" fill="none" stroke="#b1b1b3" stroke-width="1.200"/>
  <rect x="1267" y="888" width="623" height="26" fill="#232327"/>
  <rect x="1267" y="888" width="623" height="1" class="ln"/>
  <rect x="1267" y="913.500" width="623" height="1" class="ln"/>
  <path d="M1274 898.500H1282L1278 903Z" fill="#b1b1b3"/>
  <text class="hd" x="1287" y="906" textLength="22">Grid</text>
  <text x="1287" y="933" font-size="11.500" font-style="italic" fill="#b1b1b3" textLength="178">CSS Grid is not in use on this page</text>
  <rect x="1267" y="943" width="623" height="25" fill="#232327"/>
  <rect x="1267" y="942.500" width="623" height="1" class="ln"/>
  <rect x="1267" y="967" width="623" height="1" class="ln"/>
  <path d="M1274 952.500H1282L1278 957Z" fill="#b1b1b3"/>
  <text class="hd" x="1287" y="960" textLength="57">Box Model</text>
</svg>
</body>
</html>
